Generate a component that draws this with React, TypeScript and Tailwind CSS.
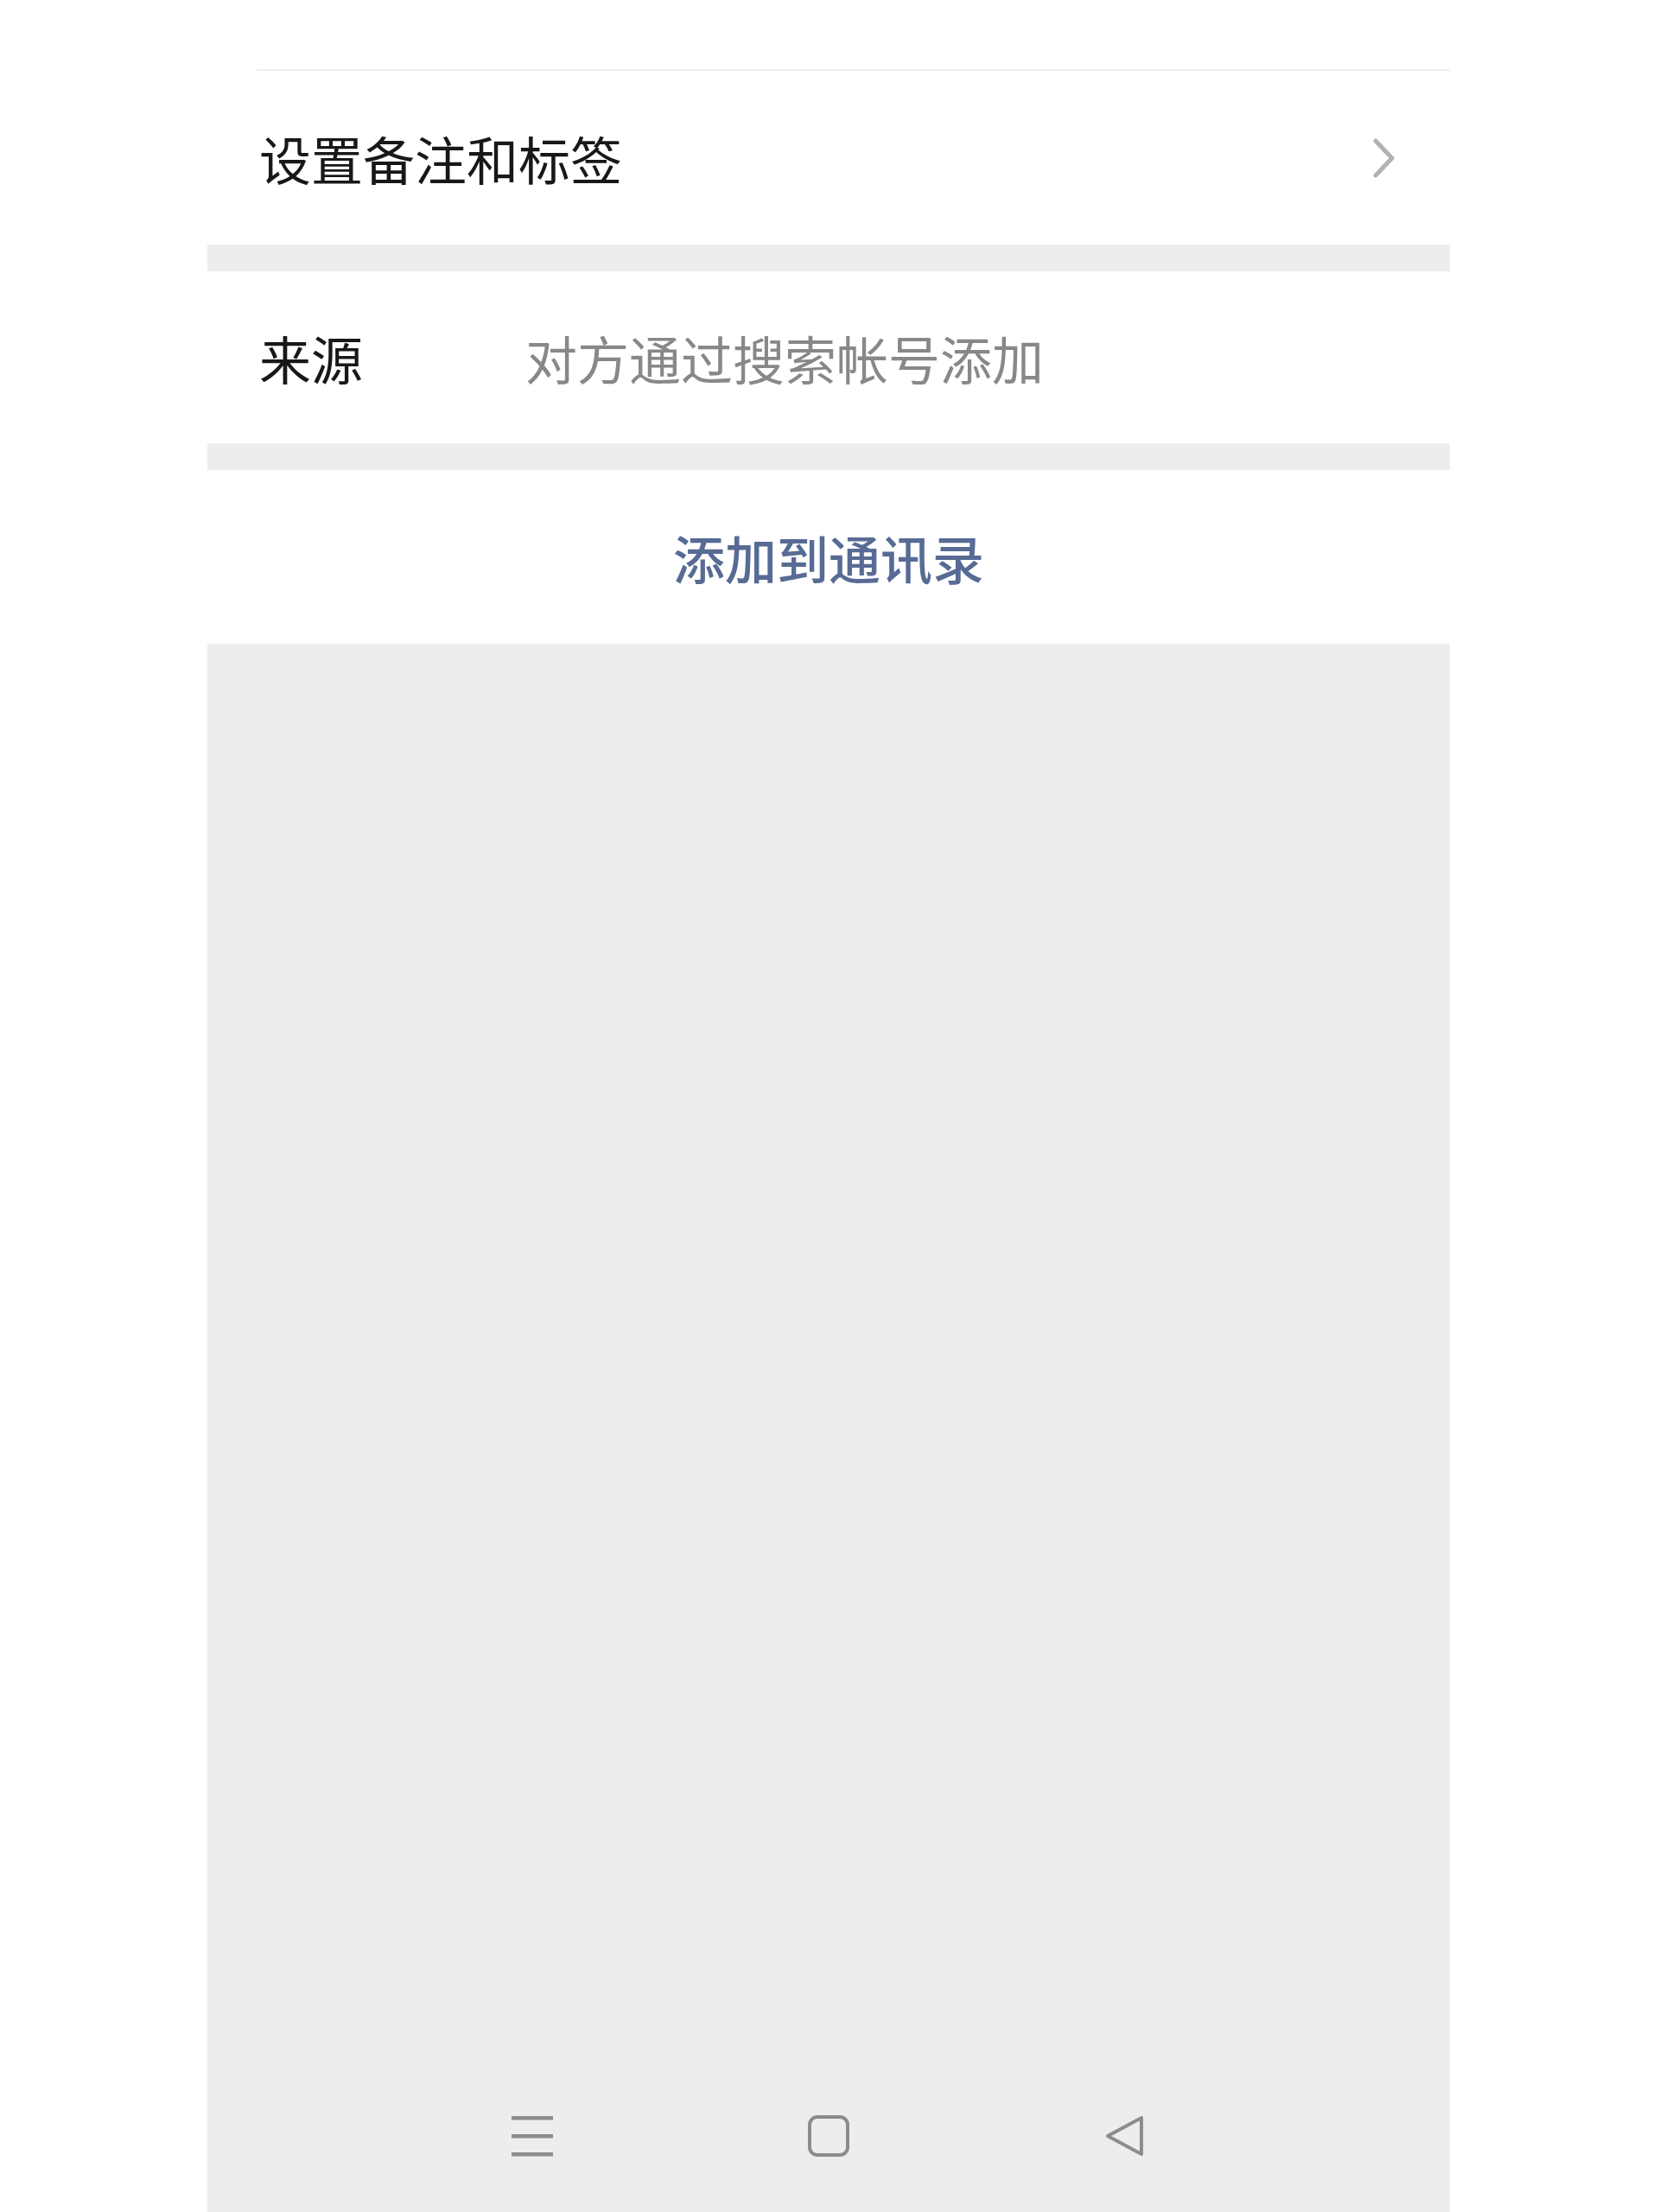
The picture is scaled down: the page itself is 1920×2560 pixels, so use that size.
const font = { fontFamily: '"Noto Sans CJK SC", "Noto Sans", sans-serif' }

function NavBar() {
  return (
    <div className="flex items-center justify-center gap-[295px] pb-[64px]">
      <svg width="48" height="48" viewBox="0 0 48 48" className="text-[#8c8c8c]">
        <rect x="0" y="1" width="48" height="4.5" fill="currentColor" />
        <rect x="0" y="22" width="48" height="4.5" fill="currentColor" />
        <rect x="0" y="43" width="48" height="4.5" fill="currentColor" />
      </svg>
      <svg width="48" height="48" viewBox="0 0 48 48" className="text-[#8c8c8c]">
        <rect x="2" y="2" width="44" height="44" rx="9" fill="none" stroke="currentColor" strokeWidth="4" />
      </svg>
      <svg width="48" height="48" viewBox="0 0 48 48" className="text-[#8c8c8c]">
        <path d="M43 3 L43 45 L4 24 Z" fill="none" stroke="currentColor" strokeWidth="4" strokeLinejoin="round" />
      </svg>
    </div>
  )
}

export default function App() {
  return (
    <div className="min-h-[2560px] bg-white" style={font}>
      <div className="ml-[240px] flex min-h-[2560px] w-[1438px] flex-col">
        <div className="h-[80px]" />
        <div className="ml-[57px] h-[2px] bg-[#efefef]" />

        <div className="flex h-[201px] items-center justify-between pl-[60px] pr-[62px]">
          <span className="text-[60px] leading-none text-[#181818]">设置备注和标签</span>
          <svg width="28" height="46" viewBox="0 0 28 46" className="text-[#b2b2b2]">
            <path d="M4 3 L23 23 L4 43" fill="none" stroke="currentColor" strokeWidth="5" strokeLinecap="round" strokeLinejoin="round" />
          </svg>
        </div>

        <div className="h-[31px] bg-[#ededed]" />

        <div className="flex h-[199px] items-center pl-[60px]">
          <span className="w-[308px] text-[60px] leading-none text-[#181818]">来源</span>
          <span className="text-[60px] leading-none text-[#888888]">对方通过搜索帐号添加</span>
        </div>

        <div className="h-[31px] bg-[#ededed]" />

        <div className="flex h-[201px] items-center justify-center">
          <span className="text-[60px] font-medium leading-none text-[#576b95]">添加到通讯录</span>
        </div>

        <div className="flex flex-1 flex-col justify-end bg-[#ededed]">
          <NavBar />
        </div>
      </div>
    </div>
  )
}
